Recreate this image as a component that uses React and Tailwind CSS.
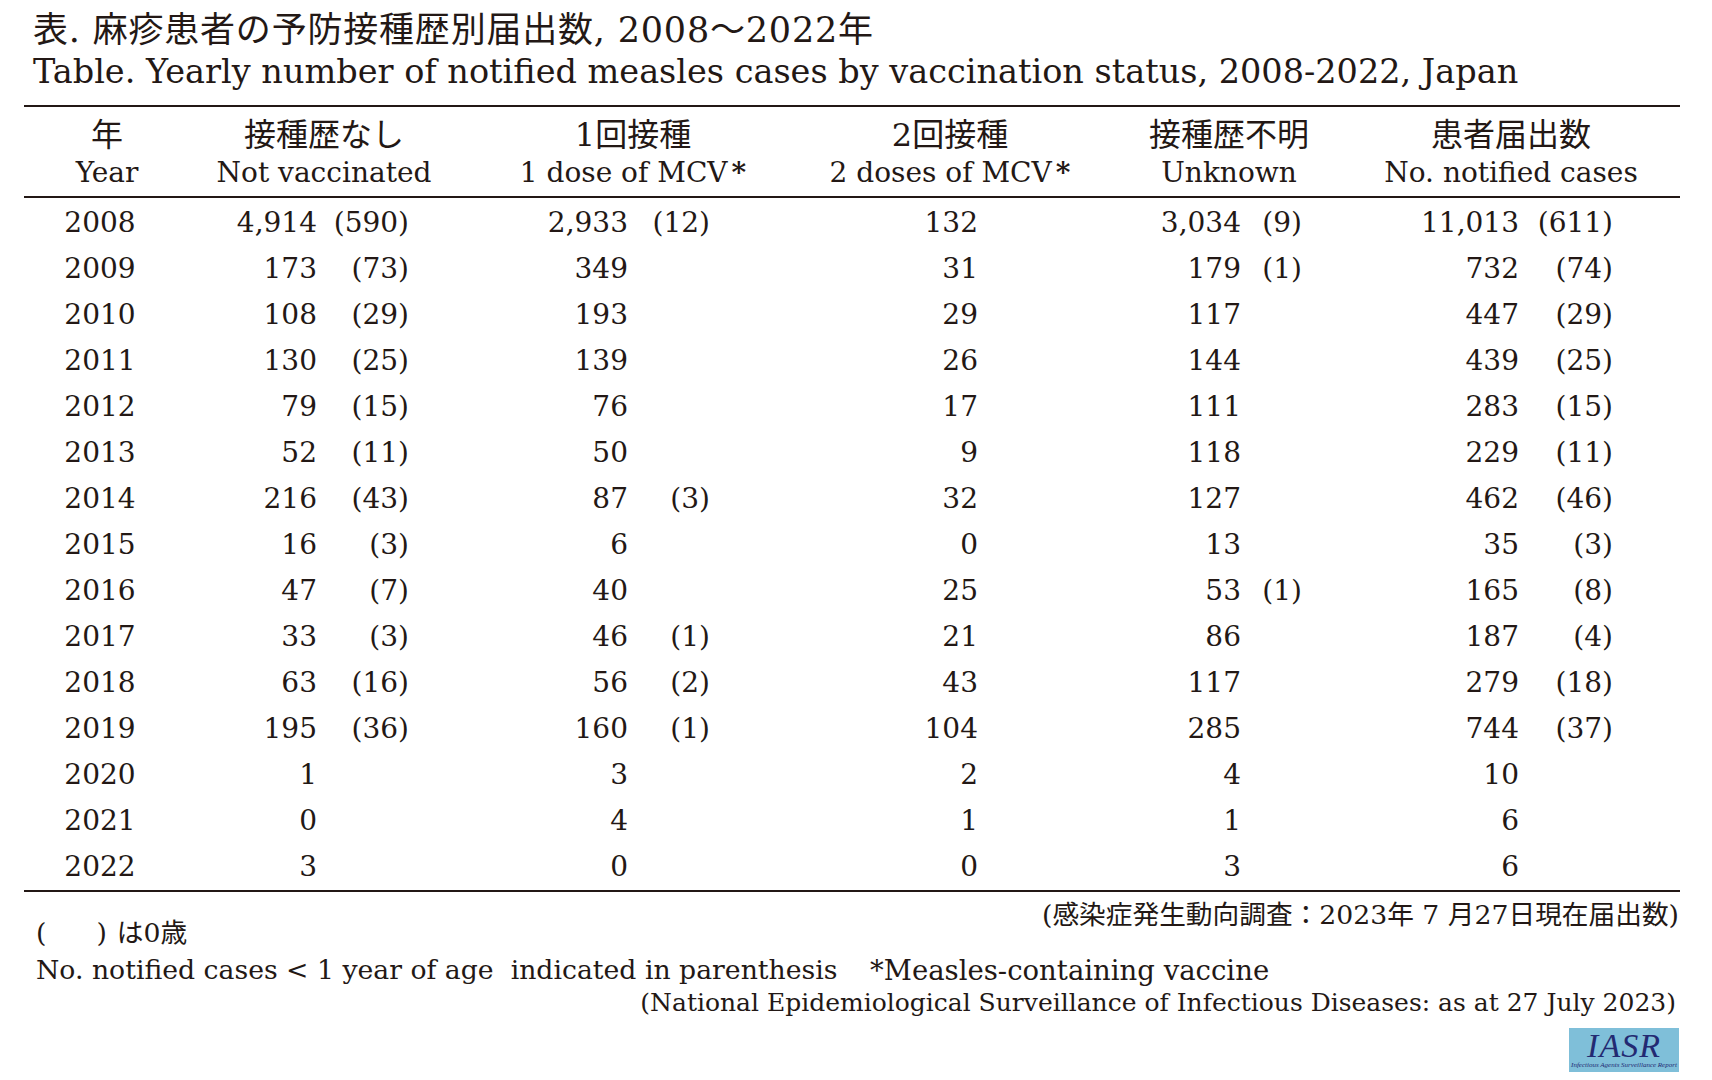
import React from "react";

const rows = [
  ["2008", "4,914", "(590)", "2,933", "(12)", "132", "3,034", "(9)", "11,013", "(611)"],
  ["2009", "173", "(73)", "349", "", "31", "179", "(1)", "732", "(74)"],
  ["2010", "108", "(29)", "193", "", "29", "117", "", "447", "(29)"],
  ["2011", "130", "(25)", "139", "", "26", "144", "", "439", "(25)"],
  ["2012", "79", "(15)", "76", "", "17", "111", "", "283", "(15)"],
  ["2013", "52", "(11)", "50", "", "9", "118", "", "229", "(11)"],
  ["2014", "216", "(43)", "87", "(3)", "32", "127", "", "462", "(46)"],
  ["2015", "16", "(3)", "6", "", "0", "13", "", "35", "(3)"],
  ["2016", "47", "(7)", "40", "", "25", "53", "(1)", "165", "(8)"],
  ["2017", "33", "(3)", "46", "(1)", "21", "86", "", "187", "(4)"],
  ["2018", "63", "(16)", "56", "(2)", "43", "117", "", "279", "(18)"],
  ["2019", "195", "(36)", "160", "(1)", "104", "285", "", "744", "(37)"],
  ["2020", "1", "", "3", "", "2", "4", "", "10", ""],
  ["2021", "0", "", "4", "", "1", "1", "", "6", ""],
  ["2022", "3", "", "0", "", "0", "3", "", "6", ""],
];

const headers = [
  { jp: "年", en: "Year", w: "w-[166px]" },
  { jp: "接種歴なし", en: "Not vaccinated", w: "w-[268px]" },
  { jp: "1回接種", en: "1 dose of MCV", star: true, w: "w-[350px]" },
  { jp: "2回接種", en: "2 doses of MCV", star: true, w: "w-[284px]" },
  { jp: "接種歴不明", en: "Unknown", w: "w-[274px]" },
  { jp: "患者届出数", en: "No. notified cases", w: "w-[290px]" },
];

const IasrLogo = () => (
  <div className="w-[110px] h-[44px] bg-[#7fbfd9] flex flex-col items-center justify-center">
    <div className="font-['Liberation_Serif',serif] italic text-[#232a72] text-[34px] leading-[30px] tracking-[1px]">
      IASR
    </div>
    <div className="font-['Liberation_Serif',serif] italic text-[#232a72] text-[7px] leading-[8px] whitespace-nowrap">
      Infectious Agents Surveillance Report
    </div>
  </div>
);

export default function App() {
  return (
    <div className="w-[1712px] h-[1080px] bg-white text-[#231815] font-['DejaVu_Serif','Noto_Sans_CJK_JP',serif] overflow-hidden">
      {/* title */}
      <div className="pt-[9px] pl-[33px]">
        <div className="text-[35px] leading-[42px] tracking-[0.8px] whitespace-nowrap">
          表. 麻疹患者の予防接種歴別届出数, 2008〜2022年
        </div>
        <div className="text-[33.5px] leading-[42px] whitespace-nowrap">
          Table. Yearly number of notified measles cases by vaccination status, 2008-2022, Japan
        </div>
      </div>

      <div className="ml-[24px] w-[1656px] mt-[12px]">
        <div className="border-t-2 border-[#231815]" />
        {/* header */}
        <div className="flex pt-[9px] pb-[4px] text-[28px] leading-[38px]">
          {headers.map((h) => (
            <div key={h.en} className={`${h.w} text-center whitespace-nowrap`}>
              <div className="text-[32px]">{h.jp}</div>
              <div>
                {h.en}
                {h.star && <span className="ml-[4px] font-bold">*</span>}
              </div>
            </div>
          ))}
        </div>
        <div className="border-t-2 border-[#231815]" />

        {/* body */}
        <div className="pt-[2px] text-[28px]">
          {rows.map((r) => (
            <div key={r[0]} className="flex items-center h-[46px] whitespace-nowrap">
              <div className="w-[152px] text-center">{r[0]}</div>
              <div className="w-[141px] text-right">{r[1]}</div>
              <div className="w-[92px] text-right">{r[2]}</div>
              <div className="w-[219px] text-right">{r[3]}</div>
              <div className="w-[82px] text-right">{r[4]}</div>
              <div className="w-[268px] text-right">{r[5]}</div>
              <div className="w-[263px] text-right">{r[6]}</div>
              <div className="w-[61px] text-right">{r[7]}</div>
              <div className="w-[217px] text-right">{r[8]}</div>
              <div className="w-[94px] text-right">{r[9]}</div>
            </div>
          ))}
        </div>
        <div className="border-t-2 border-[#231815]" />
      </div>

      {/* footer */}
      <div className="w-[1679px] pl-[36px]">
        <div className="flex justify-between items-start mt-[8px] text-[26.7px]">
          <div className="pt-[18px] leading-[30px] whitespace-nowrap">
            <span>(</span>
            <span className="ml-[50px]">)</span>
            <span className="ml-[10px]">は0歳</span>
          </div>
          <div className="leading-[30px] whitespace-nowrap">(感染症発生動向調査：2023年 7 月27日現在届出数)</div>
        </div>
        <div className="flex mt-[7px] leading-[30px] text-[26.7px] whitespace-nowrap">
          <div className="w-[834px]">No. notified cases &lt; 1 year of age&nbsp; indicated in parenthesis</div>
          <div className="text-[27.5px]">*Measles-containing vaccine</div>
        </div>
        <div className="mt-[3px] mr-[3px] leading-[30px] text-[25px] text-right whitespace-nowrap">
          (National Epidemiological Surveillance of Infectious Diseases: as at 27 July 2023)
        </div>
        <div className="flex justify-end mt-[10px]">
          <IasrLogo />
        </div>
      </div>
    </div>
  );
}
